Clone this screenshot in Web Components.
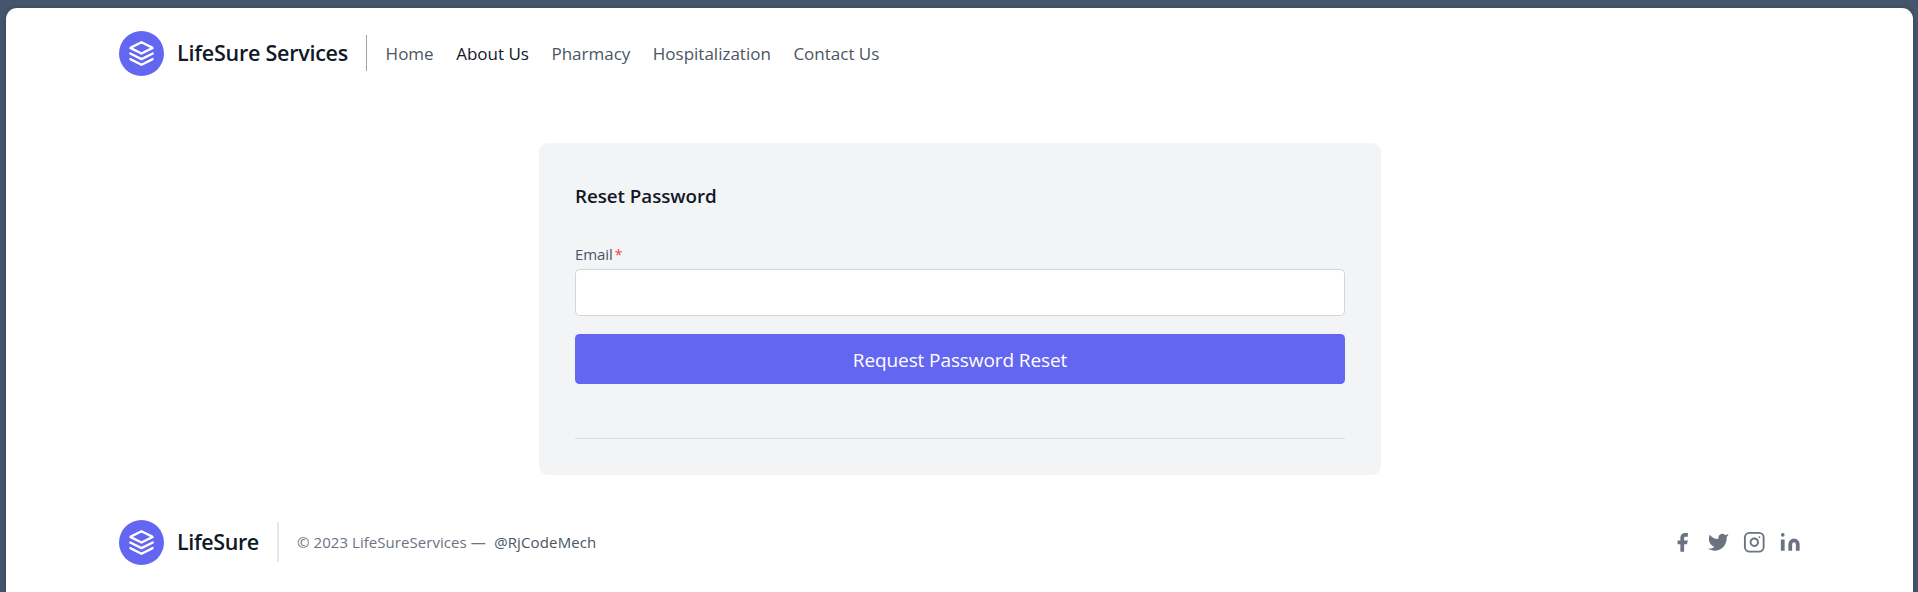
<!DOCTYPE html>
<html lang="en"><head><meta charset="utf-8"><title>LifeSure Services</title>
<style>
html{font-size:18px}
body{margin:0;height:592px;overflow:hidden;background:#45556b;font-family:"Open Sans","Noto Sans",sans-serif;display:flex;box-sizing:border-box;padding:8px 5px 0 6px}
</style></head><body>
<life-page></life-page>
<script>
const define=(name,html)=>customElements.define(name,class extends HTMLElement{
  constructor(){super();this.attachShadow({mode:'open'}).innerHTML=html}
});
define('life-logo',`<style>
:host{display:flex;align-items:center;color:#111827;font-size:21.5px;font-weight:600;line-height:32px;white-space:nowrap}
svg{width:27px;height:27px;padding:9px;border-radius:50%;background:#6366f1;color:#fff;margin-right:13px;flex:none}
span{letter-spacing:var(--brand-spacing,0);padding-bottom:2px}
</style><svg viewBox="0 0 24 24" fill="none" stroke="currentColor" stroke-width="2" stroke-linecap="round" stroke-linejoin="round"><path d="M12 2L2 7l10 5 10-5-10-5zM2 17l10 5 10-5M2 12l10 5 10-5"/></svg><span><slot></slot></span>`);
define('life-link',`<style>
:host{display:block;color:#4b5563;font-size:17px;line-height:27px;white-space:nowrap}
:host([active]){color:#111827}
</style><slot></slot>`);
define('life-header',`<style>
:host{display:flex;align-items:center;height:45px;padding:23px 113px 0;--brand-spacing:-.24px}
nav{display:flex;gap:22.5px;margin:-1px 0 0 18px;padding:5px 0 4px 18.6px;border-left:1px solid #9ca3af}
</style><life-logo>LifeSure Services</life-logo><nav><life-link>Home</life-link><life-link active>About Us</life-link><life-link>Pharmacy</life-link><life-link>Hospitalization</life-link><life-link>Contact Us</life-link></nav>`);
define('life-reset-form',`<style>
:host{display:flex;flex-direction:column;box-sizing:border-box;width:842px;height:332px;margin:67px auto 0;padding:37px 36px 36px;border-radius:9px;background:#f3f4f6}
h2{margin:0 0 27px;font-size:18.8px;line-height:32px;font-weight:600;color:#111827;letter-spacing:-.05px;text-indent:.5px}
label{height:30px;font-size:15px;line-height:30px;color:#4b5563;text-indent:.5px;letter-spacing:-.1px}
label span{color:#ef4444;margin-left:2px;font-size:14px}
input{box-sizing:border-box;width:100%;height:47px;border:1px solid #d1d5db;border-radius:4.5px;background:#fff;margin:0 0 18px;padding:0 13px;outline:0}
button{height:50px;border:0;border-radius:4.5px;background:#6366f1;color:#fff;font:19px "Open Sans",sans-serif;letter-spacing:-.1px;padding:1px 0 0 1px}
hr{width:100%;border:0;border-top:1px solid #dcdee2;margin:54px 0 0}
</style><h2>Reset Password</h2><label for="email">Email<span>*</span></label><input id="email" type="email"><button>Request Password Reset</button><hr>`);
define('life-socials',`<style>
:host{display:flex;gap:13.5px;margin:0 -1px 0 auto;color:#6b7280}
svg{width:22.5px;height:22.5px}
</style>
<svg viewBox="0 0 24 24" fill="currentColor"><path d="M18 2h-3a5 5 0 00-5 5v3H7v4h3v8h4v-8h3l1-4h-4V7a1 1 0 011-1h3z"/></svg>
<svg viewBox="0 0 24 24" fill="currentColor"><path d="M23 3a10.9 10.9 0 01-3.14 1.53 4.48 4.48 0 00-7.86 3v1A10.66 10.66 0 013 4s-4 9 5 13a11.64 11.64 0 01-7 2c9 5 20 0 20-11.5a4.5 4.5 0 00-.08-.83A7.72 7.72 0 0023 3z"/></svg>
<svg viewBox="0 0 24 24" fill="none" stroke="currentColor" stroke-width="2" stroke-linecap="round" stroke-linejoin="round"><rect width="20" height="20" x="2" y="2" rx="5"/><path d="M16 11.37A4 4 0 1112.63 8 4 4 0 0116 11.37zm1.5-4.87h.01"/></svg>
<svg viewBox="0 0 24 24" fill="currentColor"><path d="M16 8a6 6 0 016 6v7h-4v-7a2 2 0 00-2-2 2 2 0 00-2 2v7h-4v-7a6 6 0 016-6zM2 9h4v12H2z"/><circle cx="4" cy="4" r="2"/></svg>`);
define('life-footer',`<style>
:host{display:flex;align-items:center;height:45px;padding:45px 113px 0;--brand-spacing:-.4px}
p{margin:-1px 0 0 18px;padding:6.5px 0 6.5px 18.3px;border-left:2px solid #e5e7eb;font-size:15px;line-height:27px;color:#6b7280;white-space:nowrap;letter-spacing:.05px}
a{color:#4b5563;margin-left:4.5px;letter-spacing:.13px}
</style><life-logo>LifeSure</life-logo><p><span>© 2023 LifeSureServices —</span> <a>@RjCodeMech</a></p><life-socials></life-socials>`);
define('life-page',`<style>
:host{display:block;flex:1;background:#fff;border-radius:11px 11px 0 0;box-shadow:0 0 5px #0003}
</style><life-header></life-header><life-reset-form></life-reset-form><life-footer></life-footer>`);
</script></body></html>
